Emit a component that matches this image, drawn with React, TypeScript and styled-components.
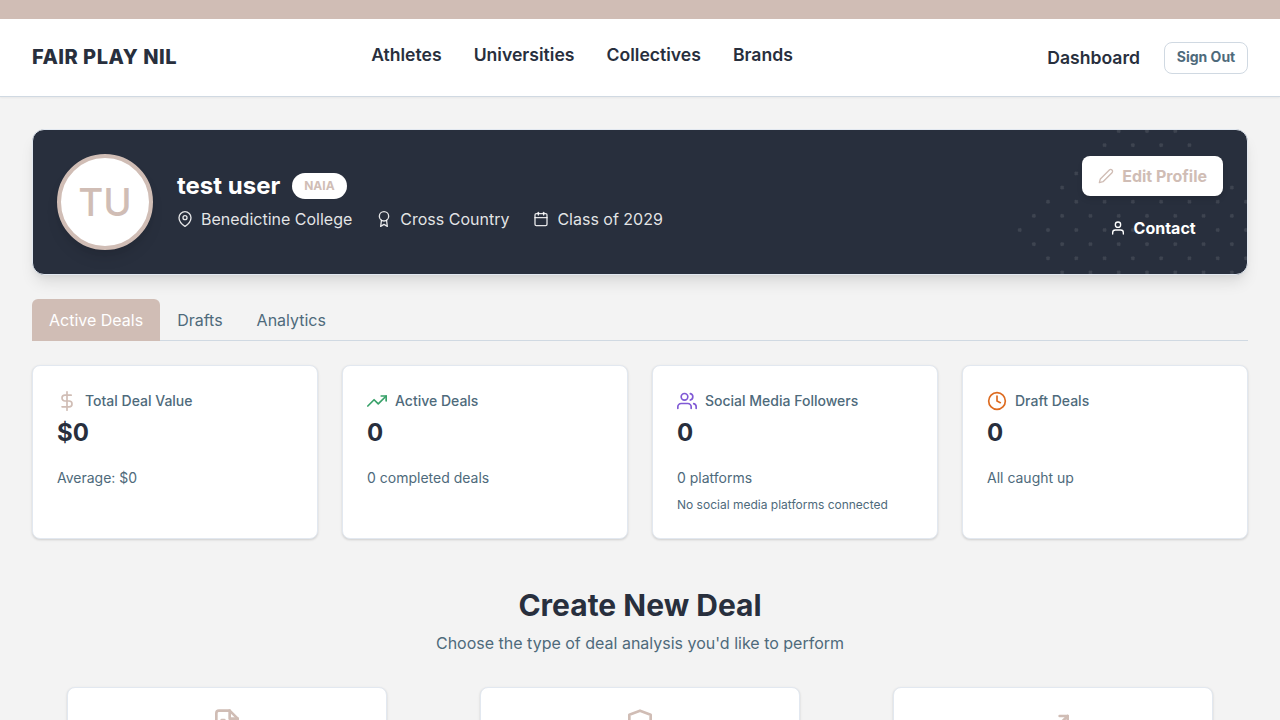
import React from "react";
import styled, { createGlobalStyle } from "styled-components";
import type { IconType } from "react-icons";
import {
  FiAward,
  FiCalendar,
  FiClock,
  FiDollarSign,
  FiEdit2,
  FiFileText,
  FiMapPin,
  FiShield,
  FiTrendingUp,
  FiUser,
  FiUsers,
} from "react-icons/fi";

const color = {
  accent: "#d0bdb5",
  ink: "#282f3d",
  slate: "#4e6a7b",
  line: "#d0d9e2",
  cardLine: "#e2e8f0",
  page: "#f3f3f3",
};

const GlobalStyle = createGlobalStyle`
  *, *::before, *::after { box-sizing: border-box; }
  body {
    margin: 0;
    background: ${color.page};
    color: ${color.ink};
    font-family: Inter, "Liberation Sans", sans-serif;
    font-size: 16px;
    line-height: 1.5;
    text-rendering: optimizeLegibility;
  }
  h1, h2, p { margin: 0; }
  button { font-family: inherit; cursor: pointer; }
`;

const Page = styled.div`
  height: 100vh;
  overflow: hidden;
`;

const TopStrip = styled.div`
  height: 19px;
  background: ${color.accent};
`;

const Header = styled.header`
  display: grid;
  grid-template-columns: 1fr auto 1fr;
  align-items: center;
  height: 78px;
  padding: 0 32px;
  background: #fff;
  border-bottom: 1px solid ${color.line};
  box-shadow: 0 1px 2px rgba(0, 0, 0, 0.05);
`;

const Brand = styled.div`
  margin-bottom: 2px;
  font-size: 20px;
  font-weight: 800;
  letter-spacing: 0.5px;
  line-height: 30px;
`;

const Nav = styled.nav`
  display: flex;
  gap: 32px;
  margin: 0 116px 6px 0;
`;

const NavLink = styled.a`
  color: ${color.ink};
  font-size: 17.6px;
  font-weight: 600;
  line-height: 27px;
  text-decoration: none;
`;

const Account = styled.div`
  display: flex;
  align-items: center;
  justify-content: flex-end;
  gap: 24px;
`;

const SignOut = styled.button`
  width: 84px;
  height: 32px;
  padding: 0 0 2px;
  background: #fff;
  border: 1px solid ${color.line};
  border-radius: 8px;
  color: ${color.slate};
  font-size: 14px;
  font-weight: 700;
`;

const Main = styled.main`
  padding: 32px 32px 0;
`;

const Hero = styled.section`
  position: relative;
  display: flex;
  align-items: center;
  gap: 24px;
  height: 146px;
  padding: 24px;
  overflow: hidden;
  background: ${color.ink};
  border: 1px solid ${color.cardLine};
  border-radius: 12px;
  box-shadow: 0 10px 15px -3px rgba(0, 0, 0, 0.1), 0 4px 6px -2px rgba(0, 0, 0, 0.05);
`;

const DotPattern = styled.div`
  position: absolute;
  top: 0;
  right: 0;
  width: 200px;
  height: 200px;
  opacity: 0.1;
  background-image: radial-gradient(circle, #fff 2px, transparent 2px);
  background-size: 20px 20px;
  transform: rotate(45deg);
`;

const Avatar = styled.div`
  display: flex;
  align-items: center;
  justify-content: center;
  width: 96px;
  height: 96px;
  background: #fff;
  border: 4px solid ${color.accent};
  border-radius: 50%;
  box-shadow: 0 10px 15px -3px rgba(0, 0, 0, 0.1), 0 4px 6px -2px rgba(0, 0, 0, 0.05);
  color: ${color.accent};
  font-size: 38.4px;
  font-weight: 500;
  line-height: 1;
`;

const Identity = styled.div`
  flex: 1;
  padding-bottom: 4px;
`;

const NameRow = styled.div`
  display: flex;
  align-items: center;
  gap: 12px;
  margin-bottom: 5px;
`;

const Name = styled.h1`
  color: #fff;
  font-size: 24px;
  font-weight: 700;
  line-height: 32px;
`;

const Badge = styled.span`
  padding: 4px 12px;
  background: #fff;
  border-radius: 13px;
  color: ${color.accent};
  font-size: 12px;
  font-weight: 700;
  line-height: 18px;
`;

const Facts = styled.div`
  display: flex;
  gap: 24px;
  color: rgba(255, 255, 255, 0.88);
`;

const Fact = styled.span`
  display: flex;
  align-items: center;
  gap: 8px;
`;

const HeroActions = styled.div`
  position: relative;
  display: flex;
  flex-direction: column;
  gap: 12px;
`;

const HeroButton = styled.button<{ $solid?: boolean }>`
  display: flex;
  align-items: center;
  justify-content: center;
  gap: 8px;
  height: 40px;
  padding: 0 16px;
  border: 0;
  border-radius: 8px;
  background: ${(p) => (p.$solid ? "#fff" : "transparent")};
  box-shadow: ${(p) =>
    p.$solid ? "0 4px 6px -1px rgba(0, 0, 0, 0.1), 0 2px 4px -1px rgba(0, 0, 0, 0.06)" : "none"};
  color: ${(p) => (p.$solid ? color.accent : "#fff")};
  font-size: 16px;
  font-weight: 700;
`;

const TabList = styled.div`
  display: flex;
  height: 42px;
  margin: 24px 0;
  border-bottom: 1px solid ${color.line};
`;

const Tab = styled.button<{ $active?: boolean }>`
  height: 42px;
  padding: 0 17px;
  border: 0;
  border-radius: 6px 6px 0 0;
  background: ${(p) => (p.$active ? color.accent : "transparent")};
  color: ${(p) => (p.$active ? "#fff" : color.slate)};
  font-size: 16px;
`;

const StatGrid = styled.div`
  display: grid;
  grid-template-columns: repeat(4, 1fr);
  gap: 24px;
`;

const Card = styled.article`
  background: #fff;
  border: 1px solid ${color.cardLine};
  border-radius: 8px;
  box-shadow: 0 1px 3px rgba(0, 0, 0, 0.1), 0 1px 2px rgba(0, 0, 0, 0.06);
`;

const StatCard = styled(Card)`
  height: 174px;
  padding: 24px;
`;

const StatLabel = styled.div`
  display: flex;
  align-items: center;
  gap: 8px;
  height: 21px;
  margin-bottom: 4px;
  color: ${color.slate};
  font-size: 14px;
  font-weight: 500;
`;

const StatValue = styled.div`
  font-size: 24px;
  font-weight: 700;
  line-height: 36px;
`;

const StatHelp = styled.p`
  margin-top: 16px;
  color: ${color.slate};
  font-size: 14px;
  line-height: 21px;
`;

const StatNote = styled.p`
  margin-top: 8px;
  color: ${color.slate};
  font-size: 12px;
  line-height: 18px;
`;

const CreateIntro = styled.div`
  margin: 48px 0 32px;
  text-align: center;
`;

const CreateTitle = styled.h2`
  font-size: 30px;
  font-weight: 700;
  line-height: 36px;
  margin-bottom: 8px;
`;

const CreateText = styled.p`
  color: ${color.slate};
`;

const DealGrid = styled.div`
  display: grid;
  grid-template-columns: repeat(3, 1fr);
  gap: 24px;
  justify-items: center;
`;

const DealCard = styled(Card)`
  display: flex;
  flex-direction: column;
  align-items: center;
  width: 320px;
  height: 240px;
  padding: 20px;
`;

const facts: { icon: IconType; text: string }[] = [
  { icon: FiMapPin, text: "Benedictine College" },
  { icon: FiAward, text: "Cross Country" },
  { icon: FiCalendar, text: "Class of 2029" },
];

const stats: {
  icon: IconType;
  tint: string;
  label: string;
  value: string;
  help: string;
  note?: string;
}[] = [
  { icon: FiDollarSign, tint: color.accent, label: "Total Deal Value", value: "$0", help: "Average: $0" },
  { icon: FiTrendingUp, tint: "#38a169", label: "Active Deals", value: "0", help: "0 completed deals" },
  {
    icon: FiUsers,
    tint: "#805ad5",
    label: "Social Media Followers",
    value: "0",
    help: "0 platforms",
    note: "No social media platforms connected",
  },
  { icon: FiClock, tint: "#dd6b20", label: "Draft Deals", value: "0", help: "All caught up" },
];

const dealIcons: IconType[] = [FiFileText, FiShield, FiTrendingUp];

export default function App() {
  return (
    <Page>
      <GlobalStyle />
      <TopStrip />
      <Header>
        <Brand>FAIR PLAY NIL</Brand>
        <Nav>
          {["Athletes", "Universities", "Collectives", "Brands"].map((item) => (
            <NavLink key={item}>{item}</NavLink>
          ))}
        </Nav>
        <Account>
          <NavLink>Dashboard</NavLink>
          <SignOut>Sign Out</SignOut>
        </Account>
      </Header>
      <Main>
        <Hero>
          <DotPattern />
          <Avatar>TU</Avatar>
          <Identity>
            <NameRow>
              <Name>test user</Name>
              <Badge>NAIA</Badge>
            </NameRow>
            <Facts>
              {facts.map(({ icon: Icon, text }) => (
                <Fact key={text}>
                  <Icon size={16} />
                  {text}
                </Fact>
              ))}
            </Facts>
          </Identity>
          <HeroActions>
            <HeroButton $solid>
              <FiEdit2 size={16} />
              Edit Profile
            </HeroButton>
            <HeroButton>
              <FiUser size={16} />
              Contact
            </HeroButton>
          </HeroActions>
        </Hero>
        <TabList>
          <Tab $active>Active Deals</Tab>
          <Tab>Drafts</Tab>
          <Tab>Analytics</Tab>
        </TabList>
        <StatGrid>
          {stats.map(({ icon: Icon, tint, label, value, help, note }) => (
            <StatCard key={label}>
              <StatLabel>
                <Icon size={20} color={tint} />
                {label}
              </StatLabel>
              <StatValue>{value}</StatValue>
              <StatHelp>{help}</StatHelp>
              {note && <StatNote>{note}</StatNote>}
            </StatCard>
          ))}
        </StatGrid>
        <CreateIntro>
          <CreateTitle>Create New Deal</CreateTitle>
          <CreateText>Choose the type of deal analysis you'd like to perform</CreateText>
        </CreateIntro>
        <DealGrid>
          {dealIcons.map((Icon, i) => (
            <DealCard key={i}>
              <Icon size={32} color={color.accent} />
            </DealCard>
          ))}
        </DealGrid>
      </Main>
    </Page>
  );
}
